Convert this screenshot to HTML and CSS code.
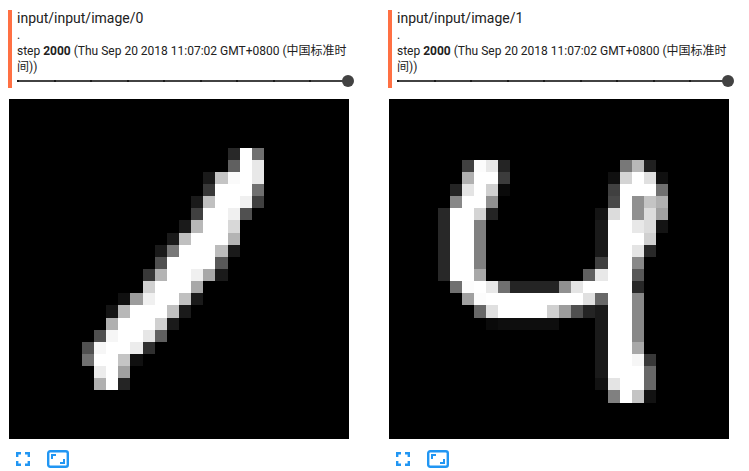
FILE: index.html
```html
<!DOCTYPE html>
<html lang="en">
<head>
<meta charset="utf-8">
<title>input/input/image</title>
<link rel="stylesheet" href="styles.css">
</head>
<body>
<main class="grid">
  <section class="card">
    <header class="head">
      <div class="title">input/input/image/0</div>
      <div class="desc">.</div>
      <div class="meta">step <b>2000</b> (Thu Sep 20 2018 11:07:02 GMT+0800 (中国标准时间))</div>
      <div class="slider"><i></i><i></i><i></i><i></i><i></i><i></i><i></i><i></i><i></i><i></i><span class="knob"></span></div>
    </header>
    <canvas class="digit" width="28" height="28" data-digit="one"></canvas>
    <div class="actions">
      <svg class="icon" viewBox="0 0 14 14" width="14" height="14"><path d="M1.2 5V1.2H5M9 1.2h3.800V5M12.800 9v3.800H9M5 12.800H1.200V9" fill="none" stroke="#2196f3" stroke-width="2.400"/></svg>
      <svg class="icon-wide" viewBox="0 0 22 18" width="22" height="18"><rect x="1.200" y="1.200" width="19.600" height="15.600" rx="2" fill="none" stroke="#2196f3" stroke-width="2.400"/><path d="M5 9V5h4M17 9v4h-4" fill="none" stroke="#2196f3" stroke-width="2"/></svg>
    </div>
  </section>
  <section class="card">
    <header class="head">
      <div class="title">input/input/image/1</div>
      <div class="desc">.</div>
      <div class="meta">step <b>2000</b> (Thu Sep 20 2018 11:07:02 GMT+0800 (中国标准时间))</div>
      <div class="slider"><i></i><i></i><i></i><i></i><i></i><i></i><i></i><i></i><i></i><i></i><span class="knob"></span></div>
    </header>
    <canvas class="digit" width="28" height="28" data-digit="four"></canvas>
    <div class="actions">
      <svg class="icon" viewBox="0 0 14 14" width="14" height="14"><path d="M1.2 5V1.2H5M9 1.2h3.800V5M12.800 9v3.800H9M5 12.800H1.200V9" fill="none" stroke="#2196f3" stroke-width="2.400"/></svg>
      <svg class="icon-wide" viewBox="0 0 22 18" width="22" height="18"><rect x="1.200" y="1.200" width="19.600" height="15.600" rx="2" fill="none" stroke="#2196f3" stroke-width="2.400"/><path d="M5 9V5h4M17 9v4h-4" fill="none" stroke="#2196f3" stroke-width="2"/></svg>
    </div>
  </section>
</main>
<script src="digits.js"></script>
</body>
</html>
```
FILE: styles.css
```css
html, body { margin: 0; padding: 0; background: #fff; }
body { width: 749px; height: 471px; overflow: hidden; font-family: Roboto, "Noto Sans CJK SC", sans-serif; color: #212121; }
.grid { display: flex; gap: 40px; padding: 10px 0 0 8px; }
.card { width: 340px; display: flex; flex-direction: column; }
.head { width: 340px; box-sizing: border-box; border-left: 4px solid #ff7043; padding-left: 5px; height: 78px; }
.title { font-size: 14px; line-height: 17px; }
.desc { font-size: 12px; line-height: 15px; margin-top: 1px; }
.meta { font-size: 12px; line-height: 16px; }
.meta b { font-weight: 700; }
.slider { display: flex; justify-content: space-between; align-items: center; height: 2px; background: #424242; margin-top: 5px; width: 331px; position: relative; }
.slider i { display: block; width: 2px; height: 2px; background: #1a1a1a; }
.knob { position: absolute; right: -6px; top: -5px; width: 12px; height: 12px; border-radius: 50%; background: #424242; }
.digit { display: block; width: 340px; height: 340px; margin: 11px 0 0 1px; image-rendering: pixelated; background: #000; }
.actions { display: flex; align-items: center; gap: 17px; margin: 11px 0 0 8px; }
.icon, .icon-wide { display: block; }
```
FILE: digits.js
```js
var DIGITS = {
  one: {
    4:"18:28 ff 70", 5:"18:60 ff e8", 6:"16:1a c4 fa ff e8", 7:"16:38 ff ff ff 70",
    8:"15:1a c0 ff ff f0 40", 9:"15:40 ff ff f0 50", 10:"14:1a b8 ff ff d8",
    11:"13:1a c0 ff ff ff b4", 12:"12:1a 78 ff ff ff bc 1a", 13:"12:50 ff ff ff ff 58",
    14:"11:38 b4 ff ff f0 a8 1a", 15:"11:d0 ff ff ff a8", 16:"9:10 9c f0 ff ff c0 1a",
    17:"8:14 b8 ff ff ff c0 1a", 18:"8:b0 ff ff ff d0 1a", 19:"7:50 f6 ff ff e6 60",
    20:"6:50 f6 ff ff ec 30", 21:"6:70 ff ff c4 10", 22:"7:ec ff a0", 23:"7:b0 ff 24"
  },
  four: {
    5:"6:40 fc e8 24|19:78 b8 20", 6:"6:b0 ff ff 3c|18:10 d4 ff e0 10",
    7:"5:24 e4 ff d0 0a|18:40 ff ff ff 70", 8:"5:88 ff ff 90|18:48 ff 90 c4 b0",
    9:"4:28 ff ff d4 24|17:14 dc ff 90 dc a0", 10:"4:28 ff ff 80|17:1a ff ff e8 dc 14",
    11:"4:28 ff ff 80|17:1a ff ff ff d0", 12:"4:28 ff ff 80|17:1a ff ff e4 28",
    13:"4:28 ff ff 80|17:40 ff ff 88", 14:"4:28 ff ff a8|16:60 e8 ff ff 58",
    15:"5:70 fc ff e8 70 24 24 24 24 90 e4 ff ff ff ff 28",
    16:"6:a0 fc ff ff ff ff ff ff ff ff e0 68 ff ff 88",
    17:"7:68 e0 ff ff ff ff d0 9c 50 24 1a ff ff 88",
    18:"8:0a 0e 0e 0e 0e 0e|17:1a ff ff 88", 19:"17:1a ff ff 88", 20:"17:1a ff ff a8",
    21:"17:1a ff ff f6 38", 22:"17:1a ff ff ff 68", 23:"17:12 e4 ff ff 68", 24:"18:80 ff c4 12"
  }
};
document.querySelectorAll("canvas[data-digit]").forEach(function (canvas) {
  var ctx = canvas.getContext("2d"), rows = DIGITS[canvas.dataset.digit];
  ctx.fillStyle = "#000";
  ctx.fillRect(0, 0, 28, 28);
  Object.keys(rows).forEach(function (row) {
    rows[row].split("|").forEach(function (run) {
      var parts = run.split(":"), col = +parts[0];
      parts[1].split(" ").forEach(function (hex, i) {
        ctx.fillStyle = "#" + hex + hex + hex;
        ctx.fillRect(col + i, +row, 1, 1);
      });
    });
  });
});
```
